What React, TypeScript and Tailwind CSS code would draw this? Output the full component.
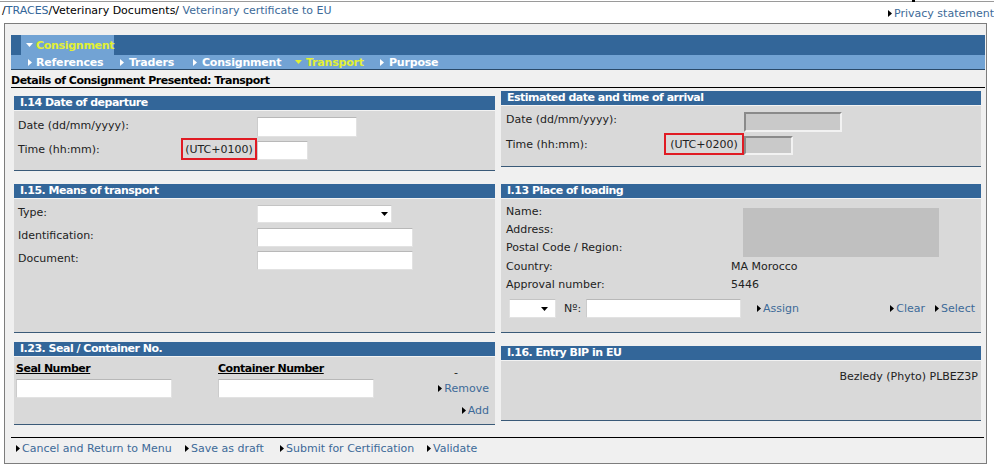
import React from "react";

const TriR = ({ color = "#000" }: { color?: string }) => (
  <svg width="4" height="7" viewBox="0 0 4 7" className="inline-block shrink-0">
    <path d="M0 0L4 3.5L0 7Z" fill={color} />
  </svg>
);

const TriD = ({ color = "#000" }: { color?: string }) => (
  <svg width="7" height="4" viewBox="0 0 7 4" className="inline-block shrink-0">
    <path d="M0 0H7L3.5 4Z" fill={color} />
  </svg>
);

function Lnk({ children, className = "" }: { children: React.ReactNode; className?: string }) {
  return (
    <span className={`inline-flex items-center gap-[2px] text-[#3d6a98] whitespace-nowrap ${className}`}>
      <TriR />
      <span>{children}</span>
    </span>
  );
}

function Section({
  title,
  className = "",
  bodyClass = "",
  children,
}: {
  title: string;
  className?: string;
  bodyClass?: string;
  children?: React.ReactNode;
}) {
  return (
    <div className={className}>
      <div className="h-[14px] bg-[#336699] pl-[6px] text-white font-bold tracking-[-0.5px] leading-[14px] whitespace-nowrap">
        {title}
      </div>
      <div className="h-px bg-[#f2f2f2]" />
      <div className={`bg-[#d9d9d9] ${bodyClass}`}>{children}</div>
      <div className="h-px bg-[#3a5a78]" />
    </div>
  );
}

function WInput({ className = "" }: { className?: string }) {
  return <div className={`bg-white border border-[#e2e2e2] border-t-[#b8b8b8] border-l-[#cccccc] shrink-0 ${className}`} />;
}

function DInput({ className = "" }: { className?: string }) {
  return (
    <div
      className={`bg-[#c9c9c9] border-2 border-t-[#8a8a8a] border-l-[#8a8a8a] border-b-[#f2f2f2] border-r-[#f2f2f2] shrink-0 ${className}`}
    />
  );
}

function Sel({ className = "" }: { className?: string }) {
  return (
    <div className={`bg-white border border-[#e2e2e2] border-t-[#c4c4c4] flex items-center justify-end shrink-0 ${className}`}>
      <TriD />
    </div>
  );
}

function Utc({ text, className = "" }: { text: string; className?: string }) {
  return (
    <div className={`h-[22px] border-2 border-[#e01b24] flex items-center justify-center shrink-0 whitespace-nowrap ${className}`}>
      {text}
    </div>
  );
}

export default function App() {
  return (
    <div className="w-[994px] h-[468px] bg-white overflow-hidden relative font-['DejaVu_Sans',Verdana,sans-serif] text-[11px] leading-[13px] text-[#222]">
      <div className="absolute left-[912px] top-0 w-[3px] h-[2px] bg-black" />
      <div className="h-px mt-px bg-[#9a9a9a]" />
      <div className="h-[21px] flex justify-between">
        <div className="pl-[2px] pt-[2px] whitespace-nowrap">
          <span className="text-black">/</span>
          <span className="text-[#336699]">TRACES</span>
          <span className="text-black">/Veterinary Documents/</span>
          <span className="text-[#3d6a98]"> Veterinary certificate to EU</span>
        </div>
        <div className="pt-[5px]">
          <Lnk>Privacy statement</Lnk>
        </div>
      </div>

      <div className="ml-[4px] w-[983px] h-[441px] border border-[#7d7d7d] bg-[#f0f0f0] pl-[6px] pr-[1px] pt-[11px]">
        {/* Tab bar */}
        <div className="h-[20px] bg-[#336699] flex">
          <div className="w-[10px]" />
          <div className="w-[93px] bg-[#72a3d4] flex items-center pl-[5px] gap-[3px] text-[#e2f032] font-bold tracking-[-0.3px]">
            <TriD color="#ffffff" />
            <span>Consignment</span>
          </div>
        </div>
        <div className="h-[15px] bg-[#72a3d4] border-b border-[#2a4a6a] flex items-center text-white font-bold tracking-[-0.2px] whitespace-nowrap">
          <div className="ml-[17px] w-[92px] flex items-center gap-[4px]">
            <TriR color="#ffffff" />
            <span>References</span>
          </div>
          <div className="w-[73px] flex items-center gap-[5px]">
            <TriR color="#ffffff" />
            <span>Traders</span>
          </div>
          <div className="w-[102px] flex items-center gap-[5px]">
            <TriR color="#ffffff" />
            <span>Consignment</span>
          </div>
          <div className="w-[85px] flex items-center gap-[4px] text-[#e2f032]">
            <TriD color="#e2f032" />
            <span>Transport</span>
          </div>
          <div className="flex items-center gap-[5px]">
            <TriR color="#ffffff" />
            <span>Purpose</span>
          </div>
        </div>

        <div className="h-[18px] pt-[4px] border-b border-black font-bold tracking-[-0.5px] text-black whitespace-nowrap">
          Details of Consignment Presented: Transport
        </div>

        <div className="flex">
          {/* Left column */}
          <div className="ml-[3px] w-[481px]">
            <Section title="I.14 Date of departure" className="mt-[8px]" bodyClass="h-[59px] pt-[6px]">
              <div className="flex items-center h-[20px]">
                <div className="w-[243px] pl-[4px] pb-[3px]">Date (dd/mm/yyyy):</div>
                <WInput className="w-[100px] h-[20px]" />
              </div>
              <div className="flex h-[22px] mt-[1px]">
                <div className="w-[167px] pl-[4px] self-center">Time (hh:mm):</div>
                <Utc text="(UTC+0100)" className="w-[76px]" />
                <WInput className="w-[51px] h-[19px] self-end" />
              </div>
            </Section>

            <Section title="I.15. Means of transport" className="mt-[13px]" bodyClass="h-[133px] pt-[6px]">
              <div className="flex items-center h-[18px]">
                <div className="w-[243px] pl-[4px] pb-[3px]">Type:</div>
                <Sel className="w-[135px] h-[18px] pr-[3px]" />
              </div>
              <div className="flex items-center h-[19px] mt-[5px]">
                <div className="w-[243px] pl-[4px] pb-[4px]">Identification:</div>
                <WInput className="w-[156px] h-[19px]" />
              </div>
              <div className="flex items-center h-[19px] mt-[4px]">
                <div className="w-[243px] pl-[4px] pb-[4px]">Document:</div>
                <WInput className="w-[156px] h-[19px]" />
              </div>
            </Section>

            <Section title="I.23. Seal / Container No." className="mt-[9px]" bodyClass="h-[67px]">
              <div className="flex items-center h-[22px]">
                <div className="ml-[2px] w-[202px] font-bold tracking-[-0.5px] underline text-black">Seal Number</div>
                <div className="w-[236px] font-bold tracking-[-0.5px] underline text-black">Container Number</div>
                <div className="mt-[8px]">-</div>
              </div>
              <div className="flex items-center h-[19px]">
                <WInput className="ml-[2px] w-[156px] h-[19px]" />
                <WInput className="ml-[46px] w-[156px] h-[19px]" />
                <Lnk className="ml-auto mr-[6px]">Remove</Lnk>
              </div>
              <div className="flex items-center justify-end h-[20px] mt-[2px] pr-[6px]">
                <Lnk>Add</Lnk>
              </div>
            </Section>
          </div>

          {/* Right column */}
          <div className="ml-[6px] w-[480px]">
            <Section title="Estimated date and time of arrival" className="mt-[3px]" bodyClass="h-[60px] pt-[6px]">
              <div className="flex items-center h-[20px]">
                <div className="w-[243px] pl-[5px] pb-[5px]">Date (dd/mm/yyyy):</div>
                <DInput className="w-[98px] h-[20px]" />
              </div>
              <div className="flex h-[22px] mt-[1px]">
                <div className="w-[163px] pl-[5px] self-center">Time (hh:mm):</div>
                <Utc text="(UTC+0200)" className="w-[80px]" />
                <DInput className="w-[49px] h-[19px] self-end" />
              </div>
            </Section>

            <Section title="I.13 Place of loading" className="mt-[17px]" bodyClass="h-[133px] pt-[4px]">
              <div className="flex">
                <div className="w-[230px] pl-[5px]">
                  <div className="h-[18px] leading-[18px]">Name:</div>
                  <div className="h-[18px] leading-[18px]">Address:</div>
                  <div className="h-[18px] leading-[18px]">Postal Code / Region:</div>
                </div>
                <div className="ml-[12px] mt-[5px] w-[196px] h-[49px] bg-[#c0c0c0]" />
              </div>
              <div className="flex items-center h-[18px]">
                <div className="w-[230px] pl-[5px]">Country:</div>
                <div>MA Morocco</div>
              </div>
              <div className="flex items-center h-[18px]">
                <div className="w-[230px] pl-[5px]">Approval number:</div>
                <div>5446</div>
              </div>
              <div className="flex items-center h-[19px] mt-[6px]">
                <Sel className="ml-[8px] w-[47px] h-[19px] pr-[7px]" />
                <div className="ml-[8px] w-[22px]">Nº:</div>
                <WInput className="w-[155px] h-[19px]" />
                <Lnk className="ml-[16px]">Assign</Lnk>
                <Lnk className="ml-auto">Clear</Lnk>
                <Lnk className="ml-[10px] mr-[6px]">Select</Lnk>
              </div>
            </Section>

            <Section title="I.16. Entry BIP in EU" className="mt-[13px]" bodyClass="h-[59px] pt-[9px] pr-[3px] text-right">
              <div>Bezledy (Phyto) PLBEZ3P</div>
            </Section>
          </div>
        </div>

        <div className="mt-[12px] h-px w-[973px] bg-black" />
        <div className="h-[20px] flex items-center pl-[5px]">
          <div className="w-[169px]">
            <Lnk>Cancel and Return to Menu</Lnk>
          </div>
          <div className="w-[95px]">
            <Lnk>Save as draft</Lnk>
          </div>
          <div className="w-[147px]">
            <Lnk>Submit for Certification</Lnk>
          </div>
          <div>
            <Lnk>Validate</Lnk>
          </div>
        </div>
      </div>
    </div>
  );
}
